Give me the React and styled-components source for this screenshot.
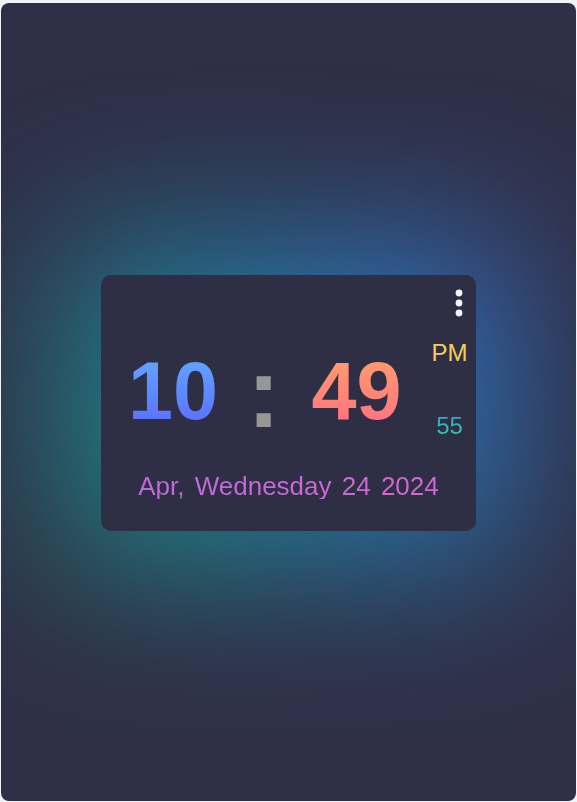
import React from 'react';
import styled, { createGlobalStyle } from 'styled-components';

const GlobalStyle = createGlobalStyle`
    html, body {
        margin: 0;
        padding: 0;
        background: #f3f3f5;
        font-family: "Liberation Sans", Arial, sans-serif;
    }
`;

const Screen = styled.div`
    position: relative;
    box-sizing: border-box;
    margin: 3px 1px 0 1px;
    padding-top: 2px;
    height: 798px;
    border-radius: 8px;
    background: #2f3047;
    display: flex;
    justify-content: center;
    align-items: center;
    overflow: hidden;
`;

const Glow = styled.div`
    position: absolute;
    left: 50%;
    top: 50%;
    width: 450px;
    height: 330px;
    transform: translate(-50%, -50%);
    background: linear-gradient(60deg, #1a9c78 0%, #2280a6 45%, #3b6ed6 100%);
    filter: blur(78px);
    opacity: 0.88;
`;

const Card = styled.div`
    position: relative;
    width: 375px;
    height: 256px;
    border-radius: 10px;
    background: #2e2e45;
    display: flex;
    flex-direction: column;
`;

const Header = styled.div`
    display: flex;
    justify-content: flex-end;
    padding: 14px 13px 0;
`;

const MenuButton = styled.div`
    display: flex;
    cursor: pointer;
`;

const TimeRow = styled.div`
    display: flex;
    align-items: flex-start;
    margin-top: 25px;
    padding-left: 27px;
`;

const Digits = styled.span`
    font-size: 81px;
    font-weight: 700;
    line-height: 1;
    margin-top: 9px;
    background: linear-gradient(to bottom, ${({ $from }) => $from}, ${({ $to }) => $to});
    -webkit-background-clip: text;
    background-clip: text;
    color: transparent;
`;

const Colon = styled.span`
    font-size: 100px;
    font-weight: 700;
    line-height: 1;
    color: #979797;
    margin: 0 31px 0 29px;
`;

const Side = styled.div`
    display: flex;
    flex-direction: column;
    align-items: center;
    margin-left: 30px;
    gap: 49px;
`;

const Meridiem = styled.span`
    font-size: 24px;
    line-height: 1;
    margin-top: -1px;
    color: #f4cf58;
`;

const Seconds = styled.span`
    font-size: 24px;
    line-height: 1;
    background: linear-gradient(to bottom, #30a3dc, #2fd18a);
    -webkit-background-clip: text;
    background-clip: text;
    color: transparent;
`;

const DateLine = styled.div`
    margin-top: 31px;
    text-align: center;
    font-size: 26px;
    line-height: 1;
    word-spacing: 3px;
    background: linear-gradient(to right, #bc6bdc, #d766d2);
    -webkit-background-clip: text;
    background-clip: text;
    color: transparent;
`;

const KebabIcon = () => (
    <svg width="8" height="28" viewBox="0 0 8 28">
        <circle cx="4" cy="4" r="3.4" fill="#f2f5ff" />
        <circle cx="4" cy="14" r="3.4" fill="#f2f5ff" />
        <circle cx="4" cy="24" r="3.4" fill="#f2f5ff" />
    </svg>
);

const App = () => {
    return (
        <>
            <GlobalStyle />
            <Screen>
                <Glow />
                <Card>
                    <Header>
                        <MenuButton>
                            <KebabIcon />
                        </MenuButton>
                    </Header>
                    <TimeRow>
                        <Digits $from="#62aaff" $to="#5a6aff">10</Digits>
                        <Colon>:</Colon>
                        <Digits $from="#ffa06c" $to="#ff6e82">49</Digits>
                        <Side>
                            <Meridiem>PM</Meridiem>
                            <Seconds>55</Seconds>
                        </Side>
                    </TimeRow>
                    <DateLine>Apr, Wednesday 24 2024</DateLine>
                </Card>
            </Screen>
        </>
    );
};

export default App;
